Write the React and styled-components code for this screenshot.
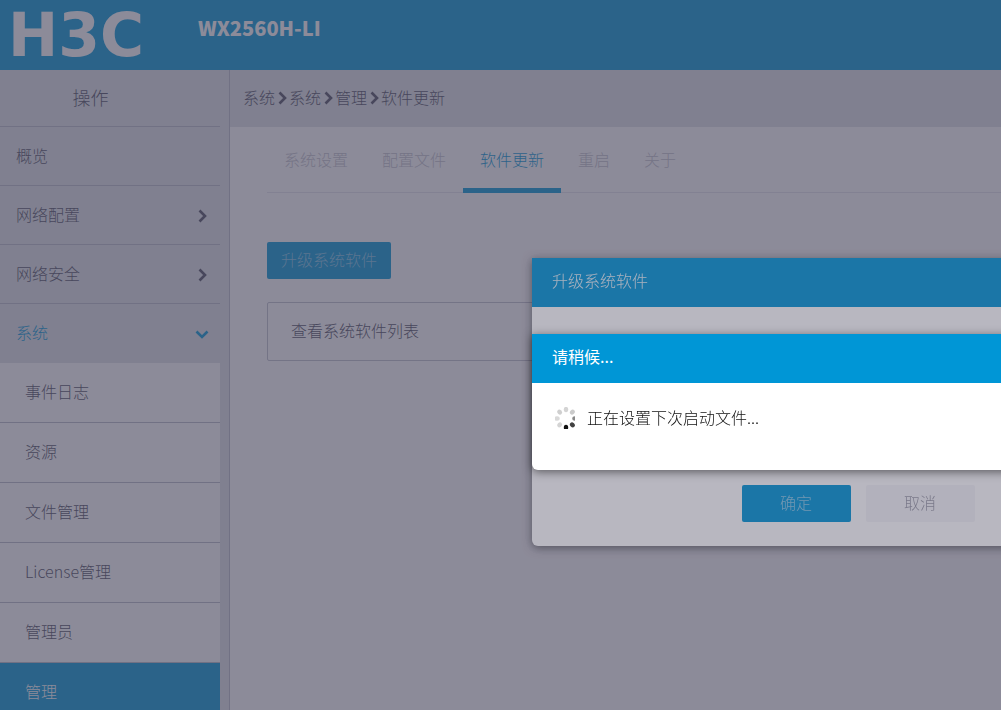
import React, { useState } from 'react';
import styled, { createGlobalStyle } from 'styled-components';

const GlobalStyle = createGlobalStyle`
  * {
    box-sizing: border-box;
  }
  body {
    margin: 0;
    overflow: hidden;
    font-family: 'Noto Sans CJK SC', sans-serif;
    font-size: 16px;
    font-weight: 300;
    line-height: 24px;
    color: #4c4c60;
    background: #fff;
  }
  button {
    font: inherit;
    cursor: pointer;
  }
  a {
    color: inherit;
    text-decoration: none;
  }
`;

const menuData = [
  { name: '概览' },
  { name: '网络配置', children: true },
  { name: '网络安全', children: true },
  { name: '系统', children: true, open: true },
];

const subMenuData = ['事件日志', '资源', '文件管理', 'License管理', '管理员', '管理'];

const pathData = ['系统', '系统', '管理', '软件更新'];

const tabData = ['系统设置', '配置文件', '软件更新', '重启', '关于'];

// opacity of each dot, clockwise from the top
const dotData = [0.18, 0.22, 0.5, 0.8, 1, 0.18, 0.16, 0.2];

const Chevron = ({ down }) => (
  <svg width="14" height="14" viewBox="0 0 14 14" aria-hidden="true">
    <path
      d={down ? 'M1.5 4.5L7 10l5.5-5.5' : 'M4.5 1.5L10 7l-5.5 5.5'}
      fill="none"
      stroke="currentColor"
      strokeWidth="2.6"
    />
  </svg>
);

const Spinner = () => (
  <svg width="20" height="22" viewBox="0 0 20 22" aria-hidden="true">
    {dotData.map((opacity, idx) => (
      <ellipse
        key={idx}
        cx="11"
        cy="2.5"
        rx="2.2"
        ry="2.7"
        fill="#111"
        fillOpacity={opacity}
        transform={`rotate(${idx * 45} 11 11.5)`}
      />
    ))}
  </svg>
);

const App = () => {
  const [tab, setTab] = useState('软件更新');

  return (
    <>
      <GlobalStyle />
      <Page>
        <Header>
          <Logo>H3C</Logo>
          <Model>WX2560H-LI</Model>
        </Header>
        <Body>
          <Sidebar>
            <MenuTitle>操作</MenuTitle>
            {menuData.map((item) => (
              <MenuItem key={item.name} href="#" $open={item.open}>
                {item.name}
                {item.children ? <Chevron down={item.open} /> : null}
              </MenuItem>
            ))}
            {subMenuData.map((name) => (
              <SubItem key={name} href="#" $active={name === '管理'}>
                {name}
              </SubItem>
            ))}
          </Sidebar>
          <Main>
            <Breadcrumb>
              {pathData.map((name, idx) => (
                <React.Fragment key={idx}>
                  {idx > 0 ? <Chevron /> : null}
                  <span>{name}</span>
                </React.Fragment>
              ))}
            </Breadcrumb>
            <Content>
              <Tabs>
                {tabData.map((name) => (
                  <Tab key={name} $active={tab === name} onClick={() => setTab(name)}>
                    {name}
                  </Tab>
                ))}
              </Tabs>
              <UpgradeButton>升级系统软件</UpgradeButton>
              <Panel>查看系统软件列表</Panel>
            </Content>
          </Main>
        </Body>
      </Page>
      <Overlay $top={258}>
        <Dialog role="dialog" aria-label="升级系统软件" $height={288}>
          <DialogTitle $muted>升级系统软件</DialogTitle>
          <DialogFooter>
            <DialogButton $primary>确定</DialogButton>
            <DialogButton>取消</DialogButton>
          </DialogFooter>
        </Dialog>
      </Overlay>
      <Overlay $top={334}>
        <Dialog role="dialog" aria-label="请稍候..." $height={136}>
          <DialogTitle>请稍候...</DialogTitle>
          <Progress>
            <Spinner />
            <span>正在设置下次启动文件...</span>
          </Progress>
        </Dialog>
      </Overlay>
    </>
  );
};

const Page = styled.div`
  display: flex;
  flex-direction: column;
  height: 100vh;
  overflow: hidden;
`;

const Header = styled.header`
  display: flex;
  flex: none;
  height: 70px;
  padding: 0 8px;
  gap: 54px;
  background: #0096d6;
  color: #fff;
`;

const Logo = styled.div`
  font-family: 'DejaVu Sans', sans-serif;
  font-size: 60px;
  font-weight: 700;
  line-height: 70px;
`;

const Model = styled.div`
  font-size: 20px;
  font-weight: 900;
  line-height: 56px;
`;

const Body = styled.div`
  display: flex;
  flex: 1;
  min-height: 0;
`;

const Sidebar = styled.nav`
  flex: none;
  width: 230px;
  padding-right: 9px;
  border-right: 1px solid #b8bcc8;
  background: #dfe3e6;
  overflow: hidden;
`;

const MenuTitle = styled.div`
  height: 57px;
  padding-right: 39px;
  font-size: 18px;
  line-height: 54px;
  text-align: center;
  border-bottom: 1px solid #b8bcc8;
`;

const MenuItem = styled.a`
  display: flex;
  align-items: center;
  justify-content: space-between;
  height: 59px;
  padding: 0 11px 2px 16px;
  border-bottom: 1px solid ${(props) => (props.$open ? 'transparent' : '#b8bcc8')};
  color: ${(props) => (props.$open ? '#0096d6' : 'inherit')};

  svg {
    margin-top: 4px;
  }
`;

const SubItem = styled.a`
  display: flex;
  align-items: center;
  height: 60px;
  padding: 0 0 4px 25px;
  border-bottom: 1px solid #b8bcc8;
  background: ${(props) => (props.$active ? '#0096d6' : '#fff')};
  color: ${(props) => (props.$active ? '#fff' : 'inherit')};
`;

const Main = styled.main`
  flex: 1;
  min-width: 0;
`;

const Breadcrumb = styled.div`
  display: flex;
  align-items: center;
  height: 57px;
  padding: 0 0 4px 13px;
  background: #dfe3e6;

  svg {
    margin-top: 2px;
  }
`;

const Content = styled.div`
  padding-left: 37px;
`;

const Tabs = styled.div`
  display: flex;
  height: 66px;
  border-bottom: 1px solid #e4e5ec;
`;

const Tab = styled.button`
  height: 66px;
  padding: 0 17px 2px;
  border: 0;
  border-top: 5px solid transparent;
  border-bottom: 5px solid ${(props) => (props.$active ? '#0096d6' : 'transparent')};
  background: none;
  color: ${(props) => (props.$active ? '#0096d6' : '#c2c2cc')};
`;

const UpgradeButton = styled.button`
  display: block;
  height: 37px;
  margin: 49px 0 23px;
  padding: 0 14px 4px;
  border: 0;
  border-radius: 2px;
  background: #0096d6;
  color: #7fc4e6;
`;

const Panel = styled.div`
  height: 59px;
  padding-left: 23px;
  line-height: 54px;
  border: 1px solid #c0c2ce;
  border-radius: 2px;
`;

const Overlay = styled.div`
  position: fixed;
  inset: 0;
  display: flex;
  align-items: flex-start;
  padding: ${(props) => props.$top}px 0 0 532px;
  overflow: hidden;
  background: rgba(70, 68, 90, 0.385);
`;

const Dialog = styled.section`
  display: flex;
  flex: none;
  flex-direction: column;
  width: 652px;
  min-height: ${(props) => props.$height}px;
  border-radius: 0 0 6px 6px;
  background: #fff;
  box-shadow: 0 2px 10px rgba(0, 0, 0, 0.5);
`;

const DialogTitle = styled.div`
  padding: 10px 20px 15px;
  background: #0096d6;
  color: ${(props) => (props.$muted ? '#e6f4fb' : '#fff')};
  font-weight: ${(props) => (props.$muted ? 300 : 400)};
`;

const DialogFooter = styled.div`
  display: flex;
  justify-content: center;
  gap: 15px;
  margin-top: auto;
  padding-bottom: 24px;
`;

const DialogButton = styled.button`
  width: 109px;
  height: 37px;
  padding: 0 0 4px;
  border: 0;
  border-radius: 2px;
  background: ${(props) => (props.$primary ? '#0096d6' : '#f6f6f8')};
  color: ${(props) => (props.$primary ? '#8ccbe8' : '#9a9aa8')};
`;

const Progress = styled.div`
  display: flex;
  align-items: flex-end;
  padding: 22px 23px;
  gap: 12px;
  color: #111;
`;

export default App;
